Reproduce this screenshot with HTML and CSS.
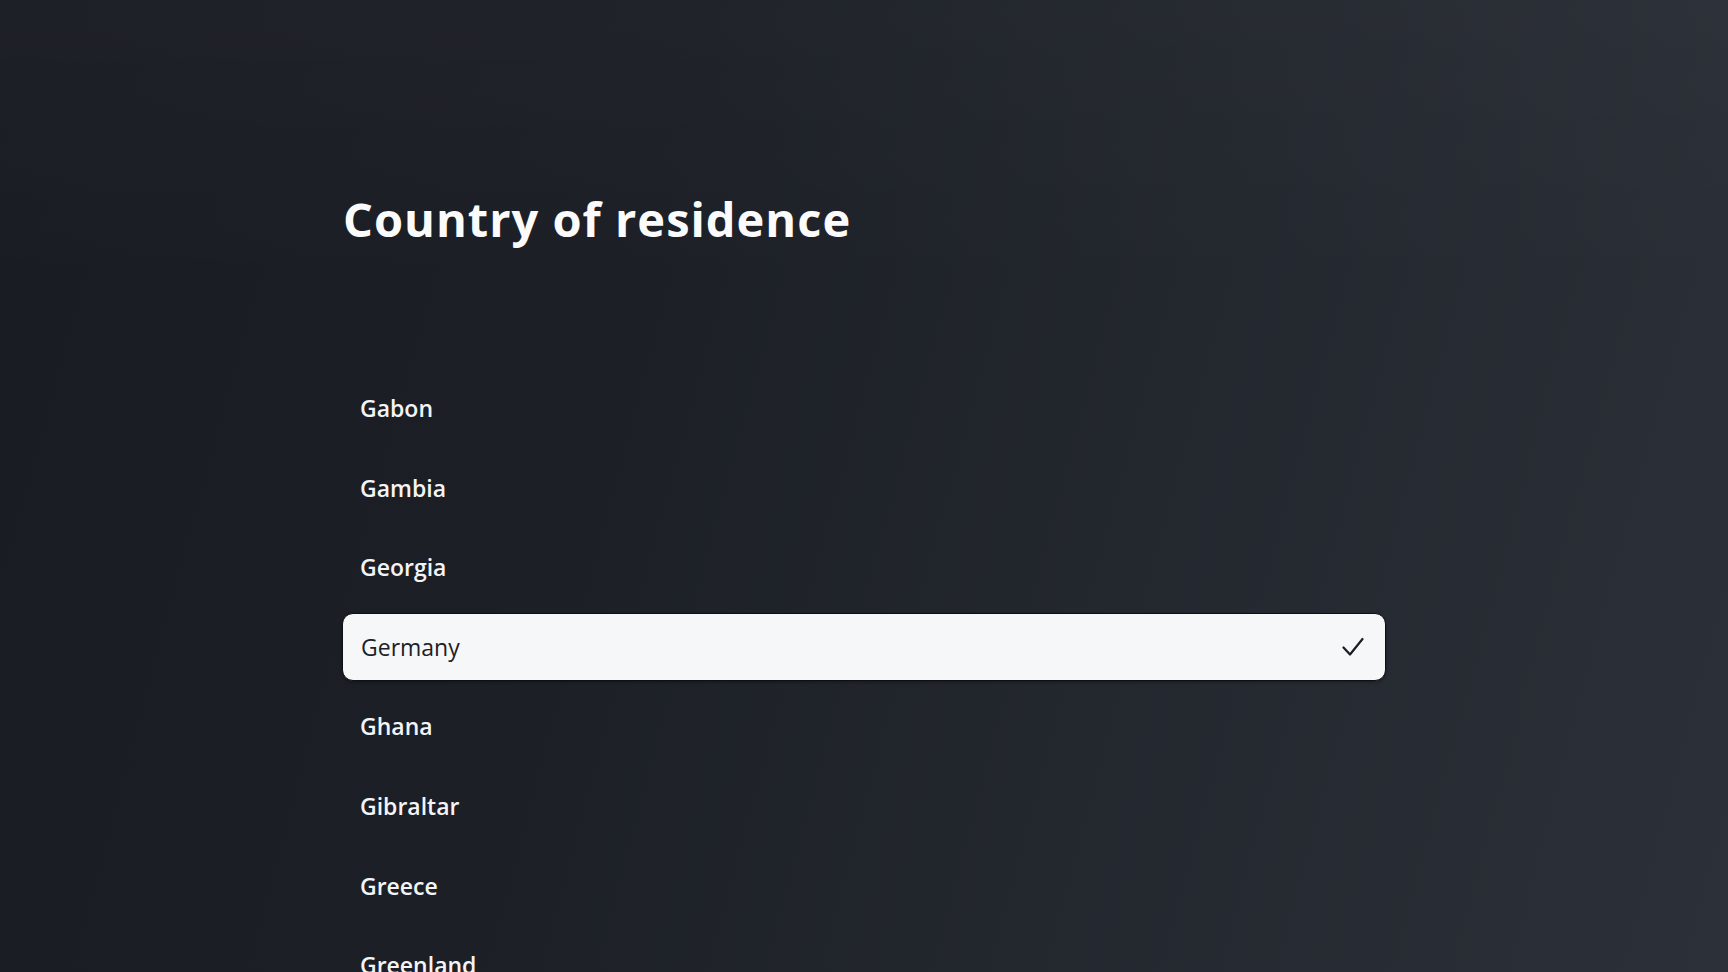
FILE: index.html
```html
<!DOCTYPE html>
<html lang="en">
<head>
<meta charset="utf-8">
<title>Country of residence</title>
<link rel="stylesheet" href="styles.css">
</head>
<body>
<main class="screen">
  <div class="content">
    <h1 class="title">Country of residence</h1>
    <ul class="list">
      <li class="item">Gabon</li>
      <li class="item">Gambia</li>
      <li class="item">Georgia</li>
      <li class="item selected"><span>Germany</span>
        <svg class="check" width="22" height="20" viewBox="0 0 22 20" aria-hidden="true"><path d="M1.5 10.5 L8 17.5 L20.5 2" fill="none" stroke="#1b1d22" stroke-width="2.2" stroke-linecap="round" stroke-linejoin="round"/></svg>
      </li>
      <li class="item">Ghana</li>
      <li class="item">Gibraltar</li>
      <li class="item">Greece</li>
      <li class="item">Greenland</li>
    </ul>
  </div>
</main>
</body>
</html>
```
FILE: styles.css
```css
html, body {
  margin: 0;
  padding: 0;
  height: 100%;
  overflow: hidden;
}
body {
  background: #1c1f25;
  font-family: "Open Sans", "Liberation Sans", sans-serif;
  color: #f5f6f8;
}
.screen {
  height: 972px;
  overflow: hidden;
  background:
    linear-gradient(180deg, rgba(255,255,255,0.02) 0%, rgba(0,0,0,0) 30%),
    linear-gradient(105deg, #191c22 0%, #1c1f26 35%, #23272e 65%, #2c3139 100%);
  padding-top: 196px;
  box-sizing: border-box;
}
.content {
  width: 1044px;
  margin: 0 auto;
}
.title {
  margin: 0 0 0 1px;
  font-size: 47px;
  line-height: 46px;
  font-weight: 700;
  letter-spacing: 1px;
  color: #fbfbfc;
}
.list {
  list-style: none;
  margin: 132px 0 0 0;
  padding: 0;
  display: flex;
  flex-direction: column;
  gap: 11.6px;
}
.item {
  height: 68px;
  box-sizing: border-box;
  padding: 0 21px 0 18px;
  display: flex;
  align-items: center;
  justify-content: space-between;
  font-size: 23px;
  font-weight: 600;
  color: #f3f4f6;
  border-radius: 11px;
}
.item.selected {
  background: #f6f7f9;
  color: #1d2026;
  font-weight: 500;
  border: 1px solid #0e1014;
  box-shadow: 0 1px 3px rgba(0,0,0,0.35);
}
.check {
  display: block;
}
```
